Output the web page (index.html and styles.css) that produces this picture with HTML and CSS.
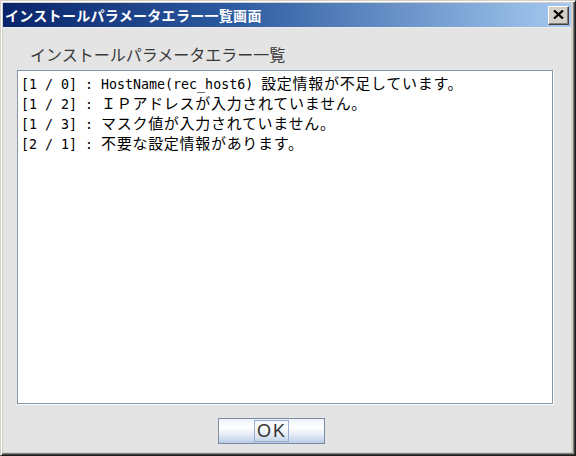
FILE: index.html
```html
<!DOCTYPE html>
<html lang="ja">
<head>
<meta charset="utf-8">
<title>インストールパラメータエラー一覧画面</title>
<link rel="stylesheet" href="styles.css">
</head>
<body>
<div class="window">
  <div class="titlebar">
    <span class="title">インストールパラメータエラー一覧画面</span>
    <span class="close" aria-label="閉じる">
      <svg width="11" height="9" viewBox="0 0 11 9"><path d="M1 0.5 L10 8.5 M10 0.5 L1 8.5" stroke="#000" stroke-width="2.2" fill="none"/></svg>
    </span>
  </div>
  <div class="content">
    <div class="label">インストールパラメータエラー一覧</div>
    <div class="list">
      <div class="row"><span class="m">[1 / 0] : HostName(rec_host6) </span><span class="j">設定情報が不足しています。</span></div>
      <div class="row"><span class="m">[1 / 2] : </span><span class="j">ＩＰアドレスが入力されていません。</span></div>
      <div class="row"><span class="m">[1 / 3] : </span><span class="j">マスク値が入力されていません。</span></div>
      <div class="row"><span class="m">[2 / 1] : </span><span class="j">不要な設定情報があります。</span></div>
    </div>
    <div class="footer">
      <div class="ok"><span class="focus">OK</span></div>
    </div>
  </div>
</div>
</body>
</html>
```

FILE: styles.css
```css
html, body {
  margin: 0;
  padding: 0;
  background: #e4e4e4;
}
.window {
  width: 576px;
  height: 456px;
  box-sizing: border-box;
  border: 1px solid;
  border-color: #d4d0c8 #1e1e1e #1e1e1e #d4d0c8;
  padding: 2px 4px 3px 2px;
  background: #d4d0c8;
  box-shadow: inset 1px 1px 0 #ffffff, inset -1px -1px 0 #404040, inset -2px -2px 0 #808080;
  display: flex;
  flex-direction: column;
  font-family: "Noto Sans CJK JP", sans-serif;
}
.titlebar {
  height: 24px;
  flex: none;
  background: linear-gradient(to right, #0a246a 0%, #2c5aa0 40%, #a6caf0 100%);
  display: flex;
  align-items: center;
  justify-content: space-between;
  padding: 0 2px 0 2px;
}
.title {
  color: #ffffff;
  font-weight: bold;
  font-size: 14px;
  letter-spacing: 0.3px;
  line-height: 24px;
}
.close {
  width: 21px;
  height: 19px;
  box-sizing: border-box;
  background: #d4d0c8;
  border: 1px solid;
  border-color: #ffffff #404040 #404040 #ffffff;
  box-shadow: inset -1px -1px 0 #808080;
  display: flex;
  align-items: center;
  justify-content: center;
  padding-bottom: 1px;
}
.content {
  flex: 1;
  background: #e4e4e4;
  border-top: 1px solid #ececec;
  padding: 16px 18px 0 14px;
  display: flex;
  flex-direction: column;
}
.label {
  font-size: 16px;
  line-height: 20px;
  color: #3a3a3a;
  padding-left: 13px;
  height: 22px;
  margin-bottom: 4px;
}
.list {
  height: 334px;
  box-sizing: border-box;
  background: #ffffff;
  border: 1px solid #8797a8;
  box-shadow: 1px 1px 0 #ffffff;
  padding: 1px 3px;
}
.row {
  height: 20px;
  line-height: 20px;
  white-space: pre;
  color: #000000;
}
.m {
  font-family: "DejaVu Sans Mono", monospace;
  font-size: 13.3px;
}
.j {
  font-family: "Noto Sans CJK JP", sans-serif;
  font-size: 15px;
  letter-spacing: 0.7px;
}
.footer {
  display: flex;
  padding: 14px 0 0 201px;
}
.ok {
  width: 107px;
  height: 26px;
  box-sizing: border-box;
  border: 1px solid #7d8ca3;
  background: linear-gradient(to bottom, #eef3fa 0%, #ffffff 35%, #dfe8f4 70%, #b9cce6 100%);
  display: flex;
  align-items: center;
  justify-content: center;
}
.focus {
  border: 1px solid #98aed0;
  padding: 0 1px 0 2px;
  height: 20px;
  line-height: 20px;
  font-family: "Liberation Sans", sans-serif;
  font-size: 18px;
  letter-spacing: 2px;
  color: #333333;
}
```
